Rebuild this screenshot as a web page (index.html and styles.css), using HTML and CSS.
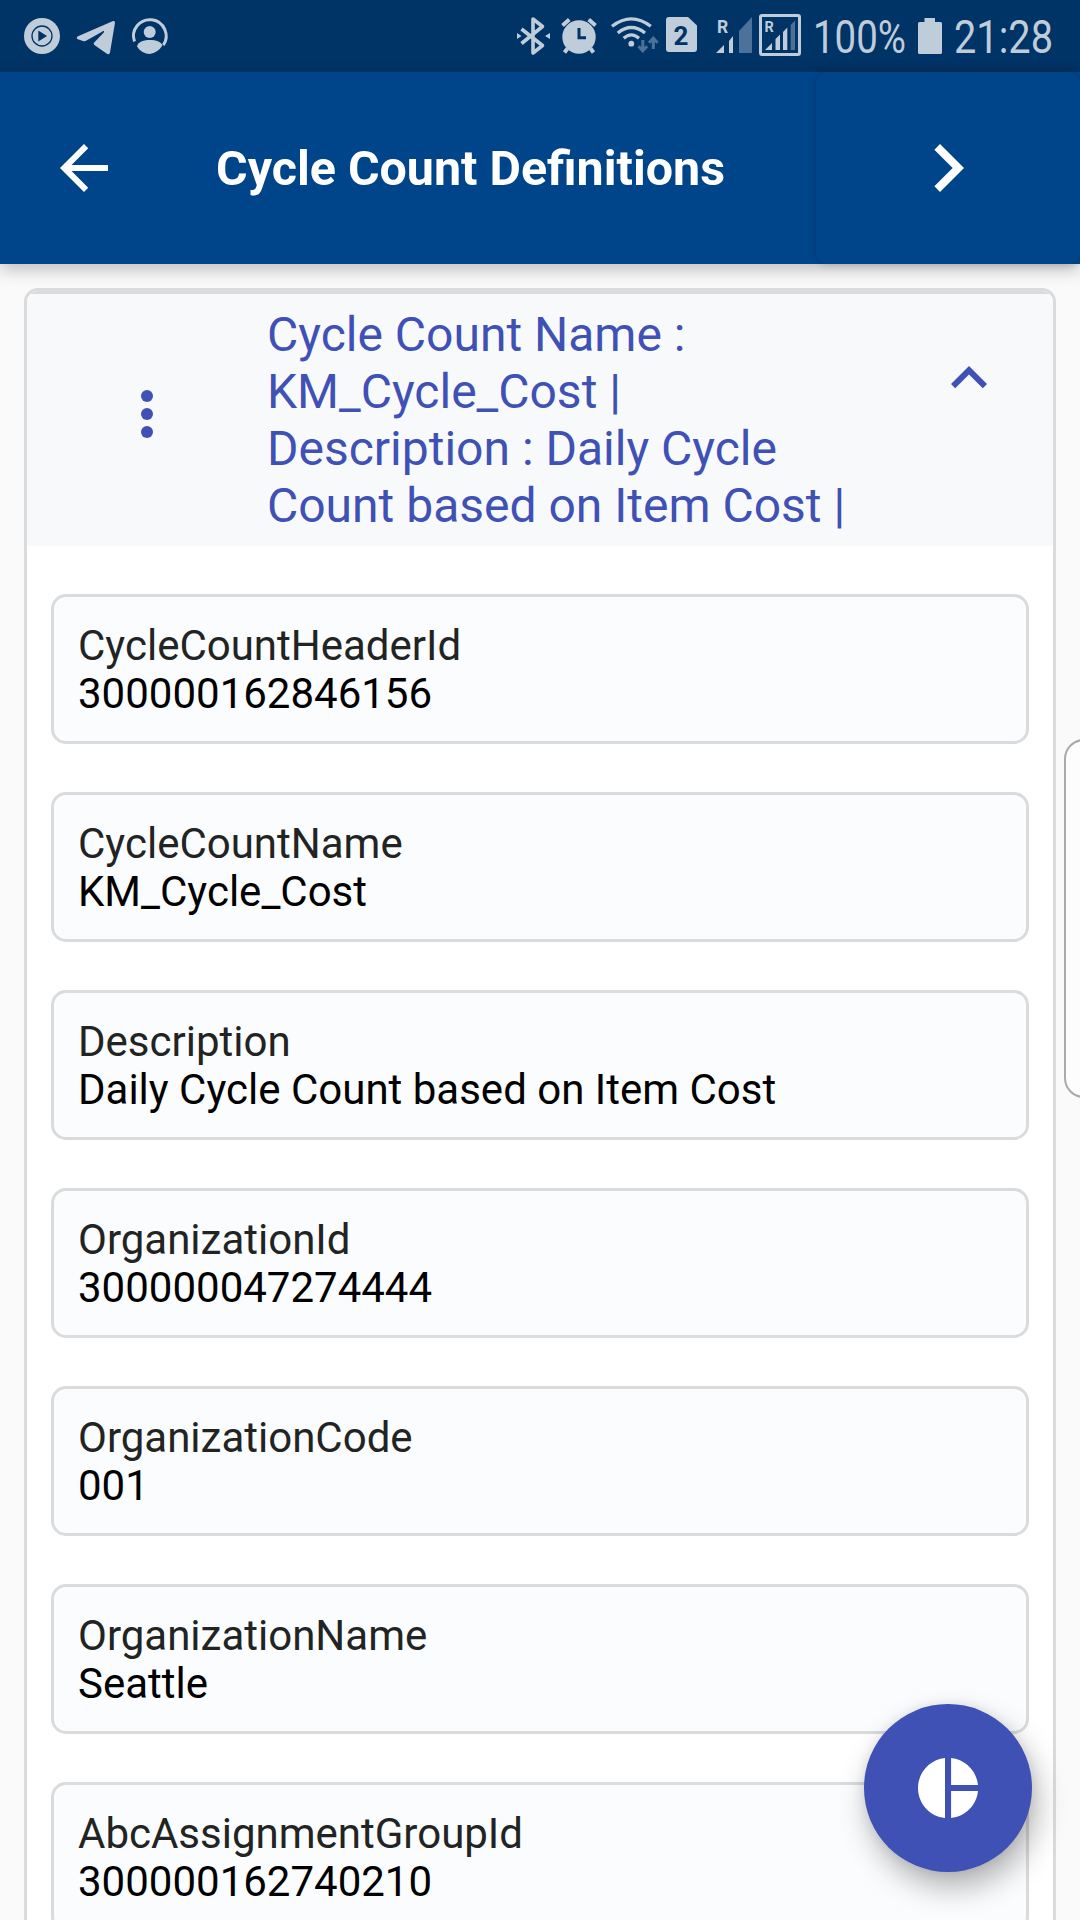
FILE: index.html
```html
<!DOCTYPE html>
<html lang="en">
<head>
<meta charset="utf-8">
<title>Cycle Count Definitions</title>
<link rel="stylesheet" href="styles.css">
</head>
<body>
<div class="status">
  <div class="status-group">
    <svg width="68" height="72" viewBox="0 0 68 72"><circle cx="42" cy="36" r="18"/><circle class="cut-line" cx="42" cy="36" r="10" stroke-width="1.3"/><path class="cut" d="M38.3 30.5 47 36l-8.700 5.400z"/></svg>
    <svg width="57" height="72" viewBox="68 0 57 72"><path d="M78 36.300 112.500 21.200c1.700-.7 2.700.2 2.400 2L110 52.500c-.4 1.900-2 2.100-3.500.9L94.400 45c-1-.8-1-1.500-.2-2.400l9.600-10.200c.7-1-.2-1.700-1.300-1L86.500 40.500c-1.300.8-2.300.8-3.600.4l-5-1.600c-1.700-.7-1.500-2.200.1-3z"/></svg>
    <svg width="55" height="72" viewBox="125 0 55 72"><path class="line" stroke-width="3" d="M134.500 41.500A16.300 16.300 0 1 1 163.300 45.200"/><circle cx="149.700" cy="32" r="6"/><path d="M137.200 46.500c0-4 5.600-6.500 12.500-6.500 6.500 0 11.500 1.800 12.700 5.500a17.800 17.800 0 0 1-12.700 8.400c-4.500 0-10.500-2.900-12.500-7.400z"/></svg>
  </div>
  <div class="status-group">
    <svg width="47" height="72" viewBox="508 0 47 72"><path class="line" stroke-width="3.600" stroke-linejoin="round" d="M521.500 29 542.500 45.500 533 53V19l9.500 7.500L521.500 43.500"/><path d="M517 33l4.500 3-4.500 3zM550 33l-5 3 5 3z"/></svg>
    <svg width="50" height="72" viewBox="555 0 50 72"><circle cx="579" cy="37" r="16.700"/><path class="line" stroke-width="4" d="M562.500 25.500l6.800-6M588.700 19.500l6.800 6M567.500 48.500l-3 4M590.500 48.500l3 4"/><path class="cut-line" stroke-width="3" d="M579 28v9.700h7"/></svg>
    <svg width="55" height="72" viewBox="605 0 55 72"><circle cx="631.300" cy="43.700" r="2.900"/><path class="line" stroke-width="3.300" d="M612 26.300Q631.300 11.500 650.800 26.300M617.800 33Q631.300 22 645 33M623.700 38.300Q631.300 31.500 639 38.300"/><path class="dim-line" stroke-width="3" d="M642.800 40v10.500M638.500 46.300l4.300 4.500 4.300-4.500M653.300 49V38.500M649 42.700l4.300-4.500 4.300 4.500"/></svg>
    <svg width="45" height="72" viewBox="660 0 45 72"><path d="M669 17h19l9 8.500V49a3 3 0 0 1-3 3h-25a3 3 0 0 1-3-3V20a3 3 0 0 1 3-3z"/><text class="cut bold" x="673.500" y="45" font-size="26">2</text></svg>
    <svg width="53" height="72" viewBox="705 0 53 72"><text class="bold" x="717" y="32.500" font-size="17.500">R</text><path d="M716 53l8-8v8zM729 41l4-5v17h-4z"/><path class="dim" d="M739 53V31l13-14v36z"/></svg>
    <svg width="50" height="72" viewBox="758 0 50 72"><rect class="line" stroke-width="3" x="760.500" y="15.500" width="39" height="39" rx="1.500"/><text class="bold" x="764.500" y="32" font-size="14.500">R</text><path d="M765 50l7-7v7zM775.500 39l4.500-4.500V50h-4.500zM783 32l4.300-4.500V50H783z"/><path class="dim" d="M790.700 25l4.300-4.500V50h-4.300z"/></svg>
    <svg width="104" height="72" viewBox="808 0 104 72"><text x="813" y="53" font-size="46" textLength="93" lengthAdjust="spacingAndGlyphs">100%</text></svg>
    <svg width="36" height="72" viewBox="912 0 36 72"><path d="M924.500 18h10.500v4h5.500q1.500 0 1.500 1.500v29q0 1.500-1.500 1.500h-21q-1.500 0-1.500-1.500v-29q0-1.500 1.500-1.500h5z"/></svg>
    <svg width="132" height="72" viewBox="948 0 132 72"><text x="954" y="53" font-size="46" textLength="99" lengthAdjust="spacingAndGlyphs">21:28</text></svg>
  </div>
</div>

<header class="appbar">
  <svg class="back" width="72" height="72" viewBox="0 0 24 24"><path d="M20 11H7.830l5.590-5.590L12 4l-8 8 8 8 1.410-1.410L7.830 13H20z"/></svg>
  <h1 class="title">Cycle Count Definitions</h1>
  <div class="next"><svg width="96" height="96" viewBox="0 0 24 24"><path d="M10 6 8.590 7.410 13.170 12l-4.580 4.590L10 18l6-6z"/></svg></div>
</header>

<main class="content">
  <section class="card">
    <div class="card-head">
      <svg class="dots" width="72" height="72" viewBox="0 0 24 24"><circle cx="12" cy="6" r="2"/><circle cx="12" cy="12" r="2"/><circle cx="12" cy="18" r="2"/></svg>
      <p class="summary">Cycle Count Name :<br>KM_Cycle_Cost |<br>Description : Daily Cycle<br>Count based on Item Cost |</p>
      <svg class="collapse" width="72" height="72" viewBox="0 0 24 24"><path d="M12 8l-6 6 1.410 1.410L12 10.830l4.590 4.580L18 14z"/></svg>
    </div>
    <div class="fields">
      <div class="field"><span class="label">CycleCountHeaderId</span><span>300000162846156</span></div>
      <div class="field"><span class="label">CycleCountName</span><span>KM_Cycle_Cost</span></div>
      <div class="field"><span class="label">Description</span><span>Daily Cycle Count based on Item Cost</span></div>
      <div class="field"><span class="label">OrganizationId</span><span>300000047274444</span></div>
      <div class="field"><span class="label">OrganizationCode</span><span>001</span></div>
      <div class="field"><span class="label">OrganizationName</span><span>Seattle</span></div>
      <div class="field"><span class="label">AbcAssignmentGroupId</span><span>300000162740210</span></div>
    </div>
  </section>
</main>

<div class="edge-handle"></div>
<div class="fab"><svg width="72" height="72" viewBox="0 0 24 24"><path d="M11 2v20c-5.070-.5-9-4.790-9-10s3.930-9.500 9-10zm2.030 0v8.990H22c-.47-4.740-4.240-8.520-8.970-8.990zm0 11.010V22c4.740-.47 8.500-4.250 8.970-8.990h-8.970z"/></svg></div>
</body>
</html>
```

FILE: styles.css
```css
* { box-sizing: border-box; }

body {
  margin: 0;
  width: 1080px;
  height: 1920px;
  position: relative;
  overflow: hidden;
  display: flex;
  flex-direction: column;
  background: #fafafa;
  font-family: Roboto, sans-serif;
  color: #000;
}

svg { display: block; flex: none; overflow: visible; }

.status {
  flex: none;
  height: 72px;
  display: flex;
  justify-content: space-between;
  background: #003366;
  fill: #bfccd9;
}
.status-group { display: flex; }
.bold { font-weight: 700; }
.cut { fill: #003366; }
.cut-line { fill: none; stroke: #003366; }
.line { fill: none; stroke: #bfccd9; }
.dim { fill: #4d7299; }
.dim-line { fill: none; stroke: #4d7299; }

.appbar {
  flex: none;
  height: 192px;
  display: flex;
  align-items: center;
  padding-left: 48px;
  background: #00458a;
  fill: #fff;
  color: #fff;
  box-shadow: 0 6px 16px rgba(0, 0, 0, .24);
  z-index: 1;
}
.title {
  flex: 1;
  margin: 0 0 0 96px;
  font-size: 48.4px;
  line-height: 57px;
  font-weight: 700;
  white-space: nowrap;
}
.next {
  width: 264px;
  height: 192px;
  display: flex;
  align-items: center;
  justify-content: center;
  border-radius: 12px;
  box-shadow: 0 0 9px rgba(0, 0, 0, .2);
}

.content { padding: 24px 24px 0; }
.card {
  height: 1700px;
  border: 3px solid #dadbdd;
  border-radius: 14px;
  background: #fff;
  overflow: hidden;
}
.card-head {
  height: 255px;
  display: flex;
  padding: 0 48px 0 84px;
  border-top: 3px solid #dadbdd;
  background: #f8f9fb;
  fill: #3f51b5;
  color: #3f51b5;
}
.dots { margin-top: 84px; }
.summary {
  flex: 1;
  margin: 12px 0 0 84px;
  font-size: 48px;
  line-height: 57px;
  white-space: nowrap;
}
.collapse { margin-top: 48px; }

.fields {
  display: flex;
  flex-direction: column;
  gap: 48px;
  padding: 48px 24px;
}
.field {
  height: 150px;
  display: flex;
  flex-direction: column;
  padding: 25px 24px 23px;
  border: 3px solid #dadbdd;
  border-radius: 15px;
  background: #fbfcfe;
  font-size: 42px;
  line-height: 48px;
}
.label { color: #222423; }

.edge-handle {
  position: absolute;
  left: 1064px;
  top: 739px;
  width: 40px;
  height: 359px;
  border: 2px solid #aaa;
  border-radius: 20px;
  background: #fdfdfd;
}

.fab {
  position: absolute;
  right: 48px;
  bottom: 48px;
  width: 168px;
  height: 168px;
  display: flex;
  align-items: center;
  justify-content: center;
  border-radius: 50%;
  background: #3f51b5;
  fill: #fff;
  box-shadow: 5px 15px 30px rgba(0, 0, 0, .3), 0 0 12px rgba(0, 0, 0, .08);
}
```
